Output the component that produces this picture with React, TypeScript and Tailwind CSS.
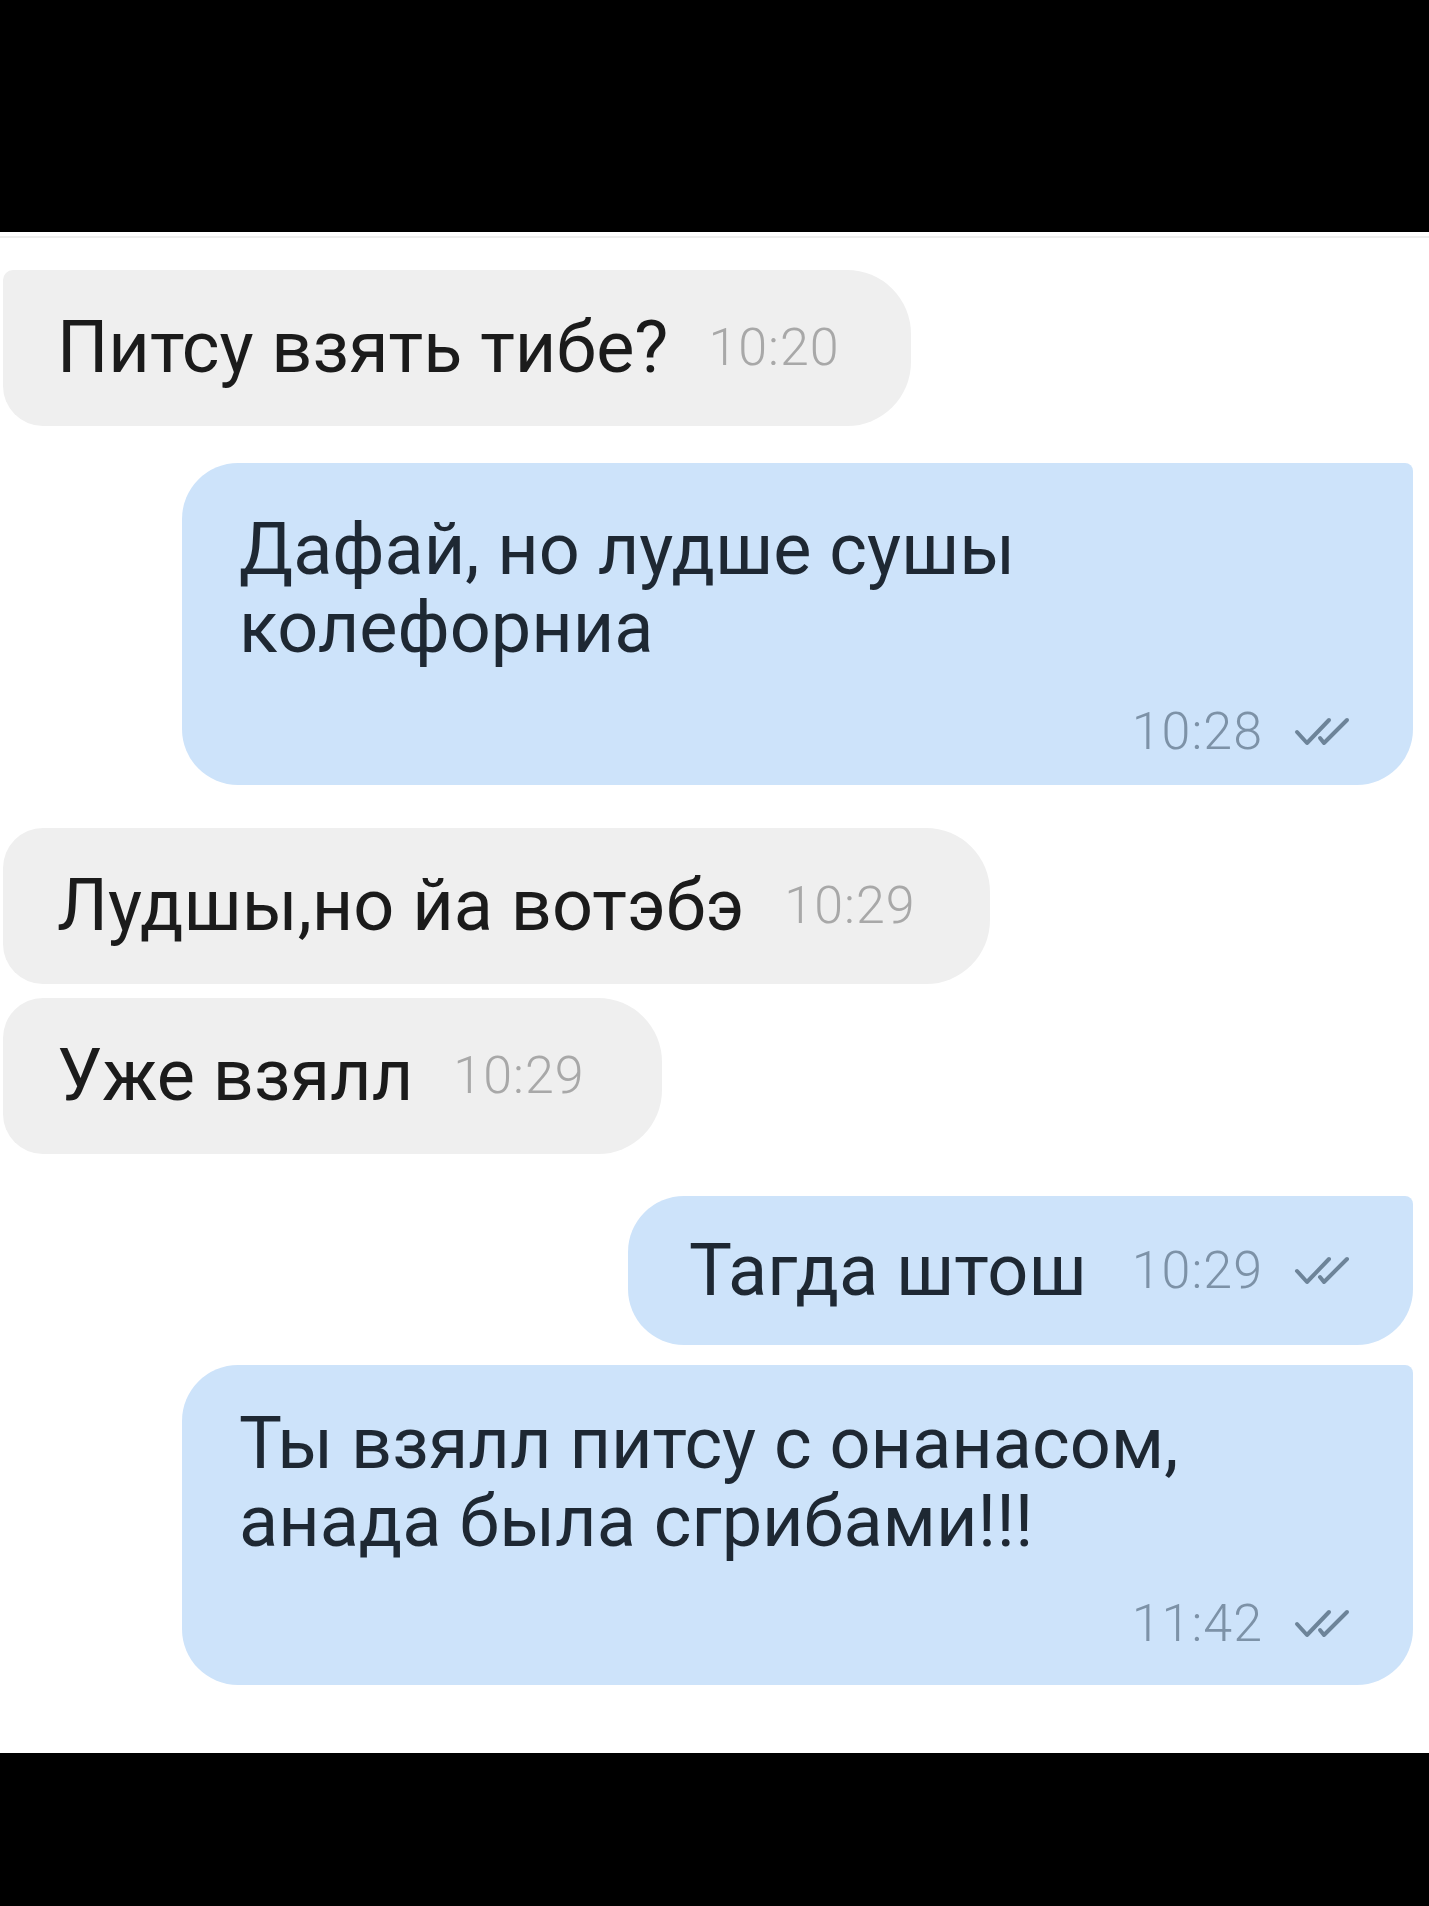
const font = { fontFamily: "Roboto, 'Liberation Sans', sans-serif" };

function Ticks() {
  return (
    <svg viewBox="0 0 68 30" className="h-[30px] w-[68px]" fill="none" stroke="#6d8499" strokeWidth="4" strokeLinecap="round" strokeLinejoin="round">
      <path d="M4 15 L14 26 L36 3" />
      <path d="M27 21 L31 26 L54 3" />
    </svg>
  );
}

function Incoming({ text, time, width, corner }: { text: string; time: string; width: string; corner: string }) {
  return (
    <div className={`ml-[3px] flex h-[156px] items-center rounded-r-[64px] rounded-bl-[40px] bg-[#efefef] pl-[54px] ${corner} ${width}`}>
      <span className="text-[72px] leading-none text-[#1b1b1b]">{text}</span>
      <span className="ml-[40px] text-[52px] font-light tracking-[1px] text-[#a8a8a8]">{time}</span>
    </div>
  );
}

export default function App() {
  return (
    <div className="flex h-[1906px] w-[1429px] flex-col bg-white" style={font}>
      <div className="h-[232px] bg-black" />
      <div className="h-[6px] border-b-2 border-[#ededed]" />
      <div className="flex flex-1 flex-col pt-[32px]">
        <Incoming text="Питсу взять тибе?" time="10:20" width="w-[908px]" corner="rounded-tl-[10px]" />

        <div className="ml-[182px] mt-[37px] flex h-[322px] w-[1231px] flex-col rounded-[56px] rounded-tr-[8px] bg-[#cde3fa] pl-[57px] pr-[52px] pt-[48px]">
          <p className="text-[72px] leading-[78px] text-[#1e2833]">
            Дафай, но лудше сушы
            <br />
            колефорниа
          </p>
          <div className="mt-[26px] flex items-center justify-end gap-[30px]">
            <span className="text-[52px] font-light tracking-[1px] text-[#7d92a7]">10:28</span>
            <Ticks />
          </div>
        </div>

        <div className="mt-[43px]">
          <Incoming text="Лудшы,но йа вотэбэ" time="10:29" width="w-[987px]" corner="rounded-tl-[40px]" />
        </div>
        <div className="mt-[14px]">
          <Incoming text="Уже взялл" time="10:29" width="w-[659px]" corner="rounded-tl-[40px]" />
        </div>

        <div className="ml-[628px] mt-[42px] flex h-[149px] w-[785px] items-center rounded-[56px] rounded-tr-[8px] bg-[#cde3fa] pl-[61px] pr-[52px]">
          <span className="text-[72px] leading-none text-[#1e2833]">Тагда штош</span>
          <span className="ml-auto text-[52px] font-light tracking-[1px] text-[#7d92a7]">10:29</span>
          <span className="ml-[30px]">
            <Ticks />
          </span>
        </div>

        <div className="ml-[182px] mt-[20px] flex h-[320px] w-[1231px] flex-col rounded-[56px] rounded-tr-[8px] bg-[#cde3fa] pl-[57px] pr-[52px] pt-[40px]">
          <p className="text-[72px] leading-[78px] text-[#1e2833]">
            Ты взялл питсу с онанасом,
            <br />
            анада была сгрибами!!!
          </p>
          <div className="mt-[24px] flex items-center justify-end gap-[30px]">
            <span className="text-[52px] font-light tracking-[1px] text-[#7d92a7]">11:42</span>
            <Ticks />
          </div>
        </div>
      </div>
      <div className="h-[153px] bg-black" />
    </div>
  );
}
